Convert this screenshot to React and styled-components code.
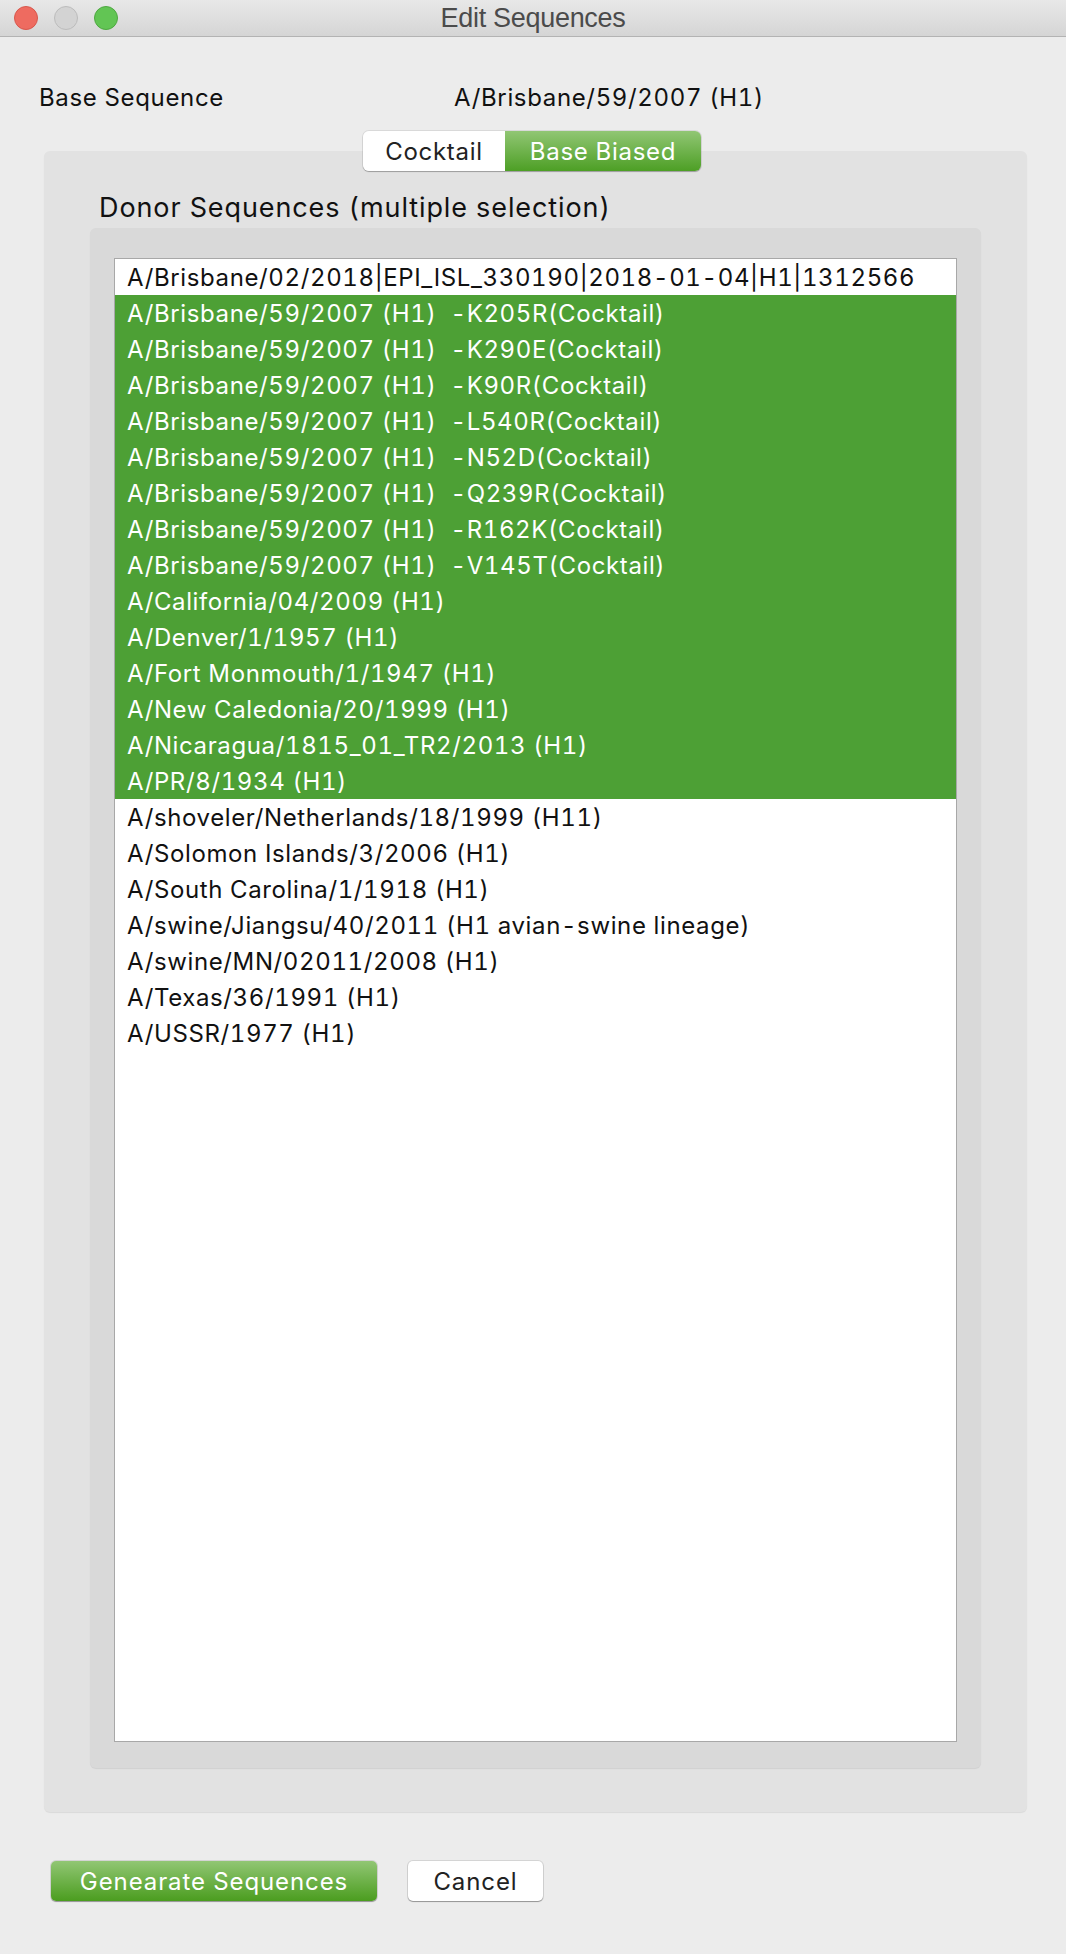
import React from 'react';
import styled, { createGlobalStyle } from 'styled-components';

const GlobalStyle = createGlobalStyle`
  html, body {
    margin: 0;
    padding: 0;
    background: #ececec;
  }
  body {
    font-family: Inter, "Noto Sans", sans-serif;
    font-feature-settings: "tnum";
    -webkit-font-smoothing: antialiased;
  }
`;

const Window = styled.div`
  width: 1066px;
  height: 1954px;
  background: #ececec;
  border-radius: 0 0 8px 8px;
  overflow: hidden;
  display: flex;
  flex-direction: column;
`;

const TitleBar = styled.div`
  height: 36px;
  flex: none;
  display: flex;
  align-items: center;
  position: relative;
  background: linear-gradient(#e8e8e8, #d5d5d5);
  border-bottom: 1px solid #b3b3b3;
`;

const Lights = styled.div`
  display: flex;
  gap: 16px;
  padding-left: 14px;
`;

const Light = styled.span`
  width: 22px;
  height: 22px;
  border-radius: 50%;
  background: ${p => p.color};
  border: 1px solid ${p => p.edge};
`;

const Title = styled.div`
  position: absolute;
  left: 0;
  right: 0;
  text-align: center;
  font-family: "Liberation Sans", Arial, sans-serif;
  font-size: 27px;
  color: #4b4b4b;
  letter-spacing: -0.3px;
`;

const BaseRow = styled.div`
  display: grid;
  grid-template-columns: 415px 1fr;
  margin: 46px 0 0 39px;
  height: 24px;
  align-items: center;
  font-size: 24px;
  letter-spacing: 0.65px;
  color: #111;
`;

const TabBar = styled.div`
  display: flex;
  align-self: center;
  margin: 24px 0 -20px;
  position: relative;
  z-index: 1;
  margin-left: -2px;
  border-radius: 6px;
  box-shadow: 0 1px 1px rgba(0, 0, 0, 0.25), 0 0 0 1px rgba(0, 0, 0, 0.08);
  overflow: hidden;
`;

const Tab = styled.div`
  height: 40px;
  display: flex;
  align-items: center;
  justify-content: center;
  font-size: 24px;
  letter-spacing: 0.7px;
  width: ${p => p.width}px;
  color: ${p => (p.active ? '#fff' : '#222')};
  background: ${p => (p.active ? 'linear-gradient(#91c674, #4d9f25)' : '#fff')};
`;

const Panel = styled.div`
  margin-left: 44px;
  width: 983px;
  height: 1661px;
  box-sizing: border-box;
  padding: 44px 46px;
  background: #e2e2e2;
  border-radius: 6px;
  box-shadow: 0 1px 1px rgba(0, 0, 0, 0.08);
  display: flex;
  flex-direction: column;
`;

const GroupLabel = styled.div`
  font-size: 27px;
  letter-spacing: 0.9px;
  height: 26px;
  line-height: 26px;
  margin-left: 9px;
  color: #111;
`;

const Inset = styled.div`
  margin-top: 7px;
  flex: 1;
  background: #d9d9d9;
  border-radius: 6px;
  box-shadow: 0 1px 1px rgba(0, 0, 0, 0.08);
  padding: 30px 24px 26px;
  display: flex;
`;

const List = styled.div`
  flex: 1;
  background: #fff;
  border: 1px solid #a8a8a8;
`;

const Row = styled.div`
  height: 36px;
  display: flex;
  align-items: center;
  padding-left: 12px;
  font-size: 24px;
  letter-spacing: 0.62px;
  white-space: pre;
  color: ${p => (p.selected ? '#fff' : '#111')};
  background: ${p => (p.selected ? '#4da035' : 'transparent')};
`;

const Footer = styled.div`
  display: flex;
  gap: 31px;
  margin: 49px 0 0 51px;
`;

const Button = styled.div`
  height: 40px;
  box-sizing: border-box;
  width: ${p => p.width}px;
  display: flex;
  align-items: center;
  justify-content: center;
  border-radius: 5px;
  font-size: 24px;
  letter-spacing: 0.9px;
  color: ${p => (p.primary ? '#fff' : '#222')};
  background: ${p => (p.primary ? 'linear-gradient(#91c674, #4b9d1f)' : '#fff')};
  box-shadow: 0 1px 1px rgba(0, 0, 0, 0.3), 0 0 0 1px rgba(0, 0, 0, 0.1);
`;

const rows = [
  ['A/Brisbane/02/2018|EPI_ISL_330190|2018-01-04|H1|1312566', false],
  ['A/Brisbane/59/2007 (H1)  -K205R(Cocktail)', true],
  ['A/Brisbane/59/2007 (H1)  -K290E(Cocktail)', true],
  ['A/Brisbane/59/2007 (H1)  -K90R(Cocktail)', true],
  ['A/Brisbane/59/2007 (H1)  -L540R(Cocktail)', true],
  ['A/Brisbane/59/2007 (H1)  -N52D(Cocktail)', true],
  ['A/Brisbane/59/2007 (H1)  -Q239R(Cocktail)', true],
  ['A/Brisbane/59/2007 (H1)  -R162K(Cocktail)', true],
  ['A/Brisbane/59/2007 (H1)  -V145T(Cocktail)', true],
  ['A/California/04/2009 (H1)', true],
  ['A/Denver/1/1957 (H1)', true],
  ['A/Fort Monmouth/1/1947 (H1)', true],
  ['A/New Caledonia/20/1999 (H1)', true],
  ['A/Nicaragua/1815_01_TR2/2013 (H1)', true],
  ['A/PR/8/1934 (H1)', true],
  ['A/shoveler/Netherlands/18/1999 (H11)', false],
  ['A/Solomon Islands/3/2006 (H1)', false],
  ['A/South Carolina/1/1918 (H1)', false],
  ['A/swine/Jiangsu/40/2011 (H1 avian-swine lineage)', false],
  ['A/swine/MN/02011/2008 (H1)', false],
  ['A/Texas/36/1991 (H1)', false],
  ['A/USSR/1977 (H1)', false],
];

export default function App() {
  return (
    <>
      <GlobalStyle />
      <Window>
        <TitleBar>
          <Lights>
            <Light color="#ee6b60" edge="#d8574c" />
            <Light color="#d3d3d3" edge="#bcbcbc" />
            <Light color="#62c554" edge="#4ea841" />
          </Lights>
          <Title>Edit Sequences</Title>
        </TitleBar>

        <BaseRow>
          <span>Base Sequence</span>
          <span>A/Brisbane/59/2007 (H1)</span>
        </BaseRow>

        <TabBar>
          <Tab width={142}>Cocktail</Tab>
          <Tab width={196} active>Base Biased</Tab>
        </TabBar>

        <Panel>
          <GroupLabel>Donor Sequences (multiple selection)</GroupLabel>
          <Inset>
            <List>
              {rows.map(([text, selected]) => (
                <Row key={text} selected={selected}>{text}</Row>
              ))}
            </List>
          </Inset>
        </Panel>

        <Footer>
          <Button primary width={326}>Genearate Sequences</Button>
          <Button width={135}>Cancel</Button>
        </Footer>
      </Window>
    </>
  );
}
